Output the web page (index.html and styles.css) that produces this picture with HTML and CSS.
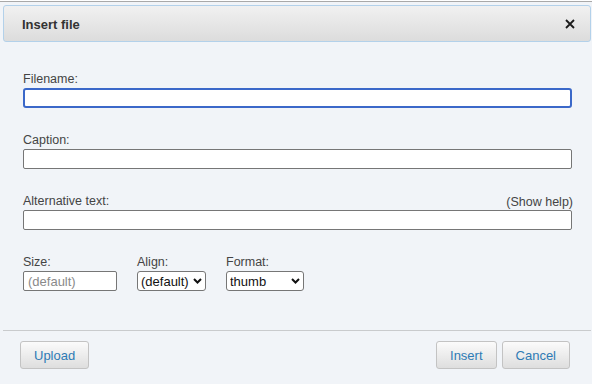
FILE: index.html
```html
<!DOCTYPE html>
<html lang="en">
<head>
  <meta charset="UTF-8">
  <title>Insert file</title>
  <link rel="stylesheet" href="styles.css">
</head>
<body>

  <div class="dialog">
    <div class="titlebar">
      <span class="title">Insert file</span>
      <span class="close-btn">
        <svg width="10" height="10" viewBox="0 0 10 10">
          <path d="M1 1 L9 9 M9 1 L1 9" stroke="#1a1a1a" stroke-width="1.8" fill="none"/>
        </svg>
      </span>
    </div>

    <div class="content">
      <div class="field">
        <label class="field-label">Filename:</label>
        <input type="text" class="text-input focused">
      </div>

      <div class="field">
        <label class="field-label">Caption:</label>
        <input type="text" class="text-input">
      </div>

      <div class="field">
        <div class="label-row">
          <label class="field-label">Alternative text:</label>
          <span class="help-link">(Show help)</span>
        </div>
        <input type="text" class="text-input">
      </div>

      <div class="option-row">
        <div class="option">
          <label class="field-label">Size:</label>
          <input type="text" class="text-input size-input" placeholder="(default)">
        </div>
        <div class="option">
          <label class="field-label">Align:</label>
          <span class="select-wrap">
            <select class="select align-select">
              <option>(default)</option>
              <option>left</option>
              <option>center</option>
              <option>right</option>
              <option>none</option>
            </select>
            <svg class="chevron" width="9" height="6" viewBox="0 0 9 6">
              <path d="M1 1 L4.5 4.5 L8 1" stroke="#111" stroke-width="2" fill="none"/>
            </svg>
          </span>
        </div>
        <div class="option">
          <label class="field-label">Format:</label>
          <span class="select-wrap">
            <select class="select format-select">
              <option>thumb</option>
              <option>frame</option>
              <option>frameless</option>
              <option>border</option>
            </select>
            <svg class="chevron" width="9" height="6" viewBox="0 0 9 6">
              <path d="M1 1 L4.5 4.5 L8 1" stroke="#111" stroke-width="2" fill="none"/>
            </svg>
          </span>
        </div>
      </div>
    </div>

    <div class="buttonpane">
      <button class="btn">Upload</button>
      <div class="buttonset">
        <button class="btn">Insert</button>
        <button class="btn">Cancel</button>
      </div>
    </div>
  </div>

</body>
</html>
```

FILE: styles.css
```css
html {
  background: #fff;
}

body {
  margin: 0;
  font-family: "Liberation Sans", Arial, sans-serif;
  color: #444;
}

.dialog {
  margin-top: 1px;
  border-top: 1px solid #a9a9a9;
  padding: 3px 1px 0 3px;
  height: 383px;
  box-sizing: border-box;
  background: #f1f4f8;
  display: flex;
  flex-direction: column;
}

.titlebar {
  height: 37px;
  box-sizing: border-box;
  border: 1px solid #b3d1ea;
  border-radius: 3px;
  background: linear-gradient(#f1f1f1, #dcdcdc);
  display: flex;
  align-items: center;
  justify-content: space-between;
  padding: 2px 15px 0 18px;
}

.title {
  font-size: 13px;
  font-weight: bold;
  color: #333;
}

.close-btn {
  display: flex;
  width: 10px;
  height: 10px;
  margin-top: -2px;
}

.content {
  padding: 30px 19px 0 20px;
  flex: 1;
}

.field {
  display: flex;
  flex-direction: column;
  margin-bottom: 25px;
}

.field-label {
  font-size: 12.5px;
  line-height: 15px;
  margin-bottom: 1px;
  color: #444;
}

.label-row {
  display: flex;
  justify-content: space-between;
  align-items: flex-end;
}

.help-link {
  font-size: 12.5px;
  line-height: 15px;
  color: #444;
  margin-right: -1px;
}

.text-input {
  height: 20px;
  box-sizing: border-box;
  border: 1px solid #767676;
  border-radius: 2px;
  background: #fff;
  font-family: "Liberation Sans", Arial, sans-serif;
  font-size: 13px;
  padding: 0 4px;
  margin: 0;
}

.text-input.focused {
  border: 2px solid #3b68c9;
  border-radius: 3px;
}

.text-input::placeholder {
  color: #8a8a8a;
}

.option-row {
  display: flex;
  gap: 20px;
}

.option {
  display: flex;
  flex-direction: column;
}

.option .field-label {
  margin-bottom: 0;
}

.size-input {
  width: 94px;
  margin-top: 1px;
}

.select-wrap {
  position: relative;
  display: flex;
  margin-top: 1px;
}

.select {
  -webkit-appearance: none;
  appearance: none;
  height: 20px;
  box-sizing: border-box;
  border: 1px solid #767676;
  border-radius: 3px;
  background: #fff;
  font-family: "Liberation Sans", Arial, sans-serif;
  font-size: 13px;
  color: #111;
  padding: 0 0 0 3px;
  margin: 0;
}

.chevron {
  position: absolute;
  right: 4px;
  top: 7px;
  pointer-events: none;
}

.align-select {
  width: 69px;
}

.format-select {
  width: 78px;
}

.buttonpane {
  border-top: 1px solid #c9cbcd;
  height: 54px;
  box-sizing: border-box;
  padding: 10px 21px 0 17px;
  display: flex;
  justify-content: space-between;
  align-items: flex-start;
}

.buttonset {
  display: flex;
  gap: 5px;
}

.btn {
  height: 28px;
  padding: 0 13px;
  border: 1px solid #c3c3c3;
  border-radius: 3px;
  background: linear-gradient(#fbfbfb, #dedede);
  font-family: "Liberation Sans", Arial, sans-serif;
  font-size: 13px;
  color: #2e7bb5;
  cursor: pointer;
}
```
